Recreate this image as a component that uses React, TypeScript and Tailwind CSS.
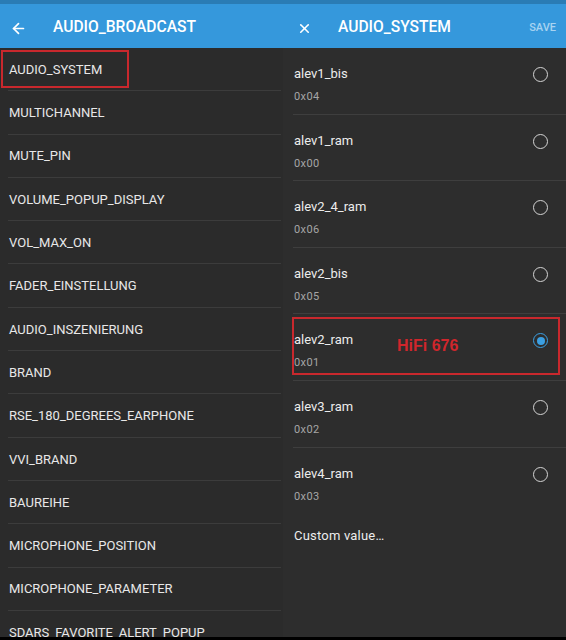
import React from 'react';
import { ArrowLeft, X } from 'lucide-react';

const settings = [
  'AUDIO_SYSTEM',
  'MULTICHANNEL',
  'MUTE_PIN',
  'VOLUME_POPUP_DISPLAY',
  'VOL_MAX_ON',
  'FADER_EINSTELLUNG',
  'AUDIO_INSZENIERUNG',
  'BRAND',
  'RSE_180_DEGREES_EARPHONE',
  'VVI_BRAND',
  'BAUREIHE',
  'MICROPHONE_POSITION',
  'MICROPHONE_PARAMETER',
  'SDARS_FAVORITE_ALERT_POPUP',
];

const options = [
  { name: 'alev1_bis', code: '0x04' },
  { name: 'alev1_ram', code: '0x00' },
  { name: 'alev2_4_ram', code: '0x06' },
  { name: 'alev2_bis', code: '0x05' },
  { name: 'alev2_ram', code: '0x01' },
  { name: 'alev3_ram', code: '0x02' },
  { name: 'alev4_ram', code: '0x03' },
];

const SELECTED = 'alev2_ram';

const Radio: React.FC<{ checked: boolean }> = ({ checked }) =>
  checked ? (
    <div className="w-[15px] h-[15px] rounded-full border-[1.5px] border-[#3b9fe2] flex items-center justify-center">
      <div className="w-[8px] h-[8px] rounded-full bg-[#3b9fe2]" />
    </div>
  ) : (
    <div className="w-[15px] h-[15px] rounded-full border-[1.5px] border-[#d4d4d4]" />
  );

const App: React.FC = () => {
  return (
    <div
      className="w-[566px] h-[640px] overflow-hidden flex flex-col bg-black"
      style={{ fontFamily: 'Roboto, "Liberation Sans", sans-serif' }}
    >
      <div className="h-[4px] bg-[#2a7cb5] shrink-0" />
      <div className="flex flex-1 min-h-0">
        {/* Left: settings list */}
        <div className="w-[283px] flex flex-col bg-[#2b2b2b]">
          <div className="h-[44px] pt-[4px] bg-[#3598dc] flex items-center shrink-0">
            <ArrowLeft className="ml-[10px] text-white" size={17} strokeWidth={2.4} />
            <span className="ml-[26px] text-white text-[15.6px] font-medium">AUDIO_BROADCAST</span>
          </div>
          <div className="flex-1 overflow-hidden">
            {settings.map((s, i) => (
              <div key={s} className="relative h-[43.3px] flex items-center">
                <span className="pl-[9px] text-[13px] text-[#e8e8e8]">{s}</span>
                <div className="absolute bottom-0 left-[8px] right-[2px] h-px bg-[#3c3c3c]" />
                {i === 0 && (
                  <div className="absolute left-[1px] top-[2px] w-[128px] h-[38px] border-2 border-[#c9282d]" />
                )}
              </div>
            ))}
          </div>
        </div>

        {/* Right: value picker */}
        <div className="flex-1 flex flex-col bg-[#2d2d2d]">
          <div className="h-[44px] pt-[4px] bg-[#3598dc] flex items-center shrink-0">
            <X className="ml-[14px] text-white" size={15} strokeWidth={2.6} />
            <span className="ml-[26px] text-white text-[15.6px] font-medium">AUDIO_SYSTEM</span>
            <span className="ml-auto mr-[10px] text-[11px] font-medium text-[#a8d3f1]">SAVE</span>
          </div>
          <div className="flex-1 overflow-hidden">
            {options.map((o, i) => (
              <div key={o.name} className="relative h-[66.6px] pl-[11px] pr-[18px] pt-[18px] flex">
                <div className="flex-1 flex flex-col">
                  <span className="text-[13px] leading-[16px] text-[#ececec]">{o.name}</span>
                  <span className="mt-[8px] text-[11px] leading-[14px] text-[#a6a6a6] tracking-[0.4px]">
                    {o.code}
                  </span>
                </div>
                <div className="pt-[1px]">
                  <Radio checked={o.name === SELECTED} />
                </div>
                {i < options.length - 1 && (
                  <div className="absolute bottom-0 left-[10px] right-0 h-px bg-[#3e3e3e]" />
                )}
                {o.name === SELECTED && (
                  <div className="absolute left-[9px] right-[6px] top-[3px] h-[58px] border-2 border-[#c9282d] flex items-center">
                    <span
                      className="ml-[103px] text-[16px] font-bold text-[#d0262c]"
                      style={{ fontFamily: '"Liberation Sans", Arial, sans-serif' }}
                    >
                      HiFi 676
                    </span>
                  </div>
                )}
              </div>
            ))}
            <div className="h-[44px] pl-[11px] flex items-center">
              <span className="text-[13px] text-[#ececec] tracking-[0.2px]">Custom value…</span>
            </div>
          </div>
        </div>
      </div>
      <div className="h-[3px] bg-black shrink-0" />
    </div>
  );
};

export default App;
